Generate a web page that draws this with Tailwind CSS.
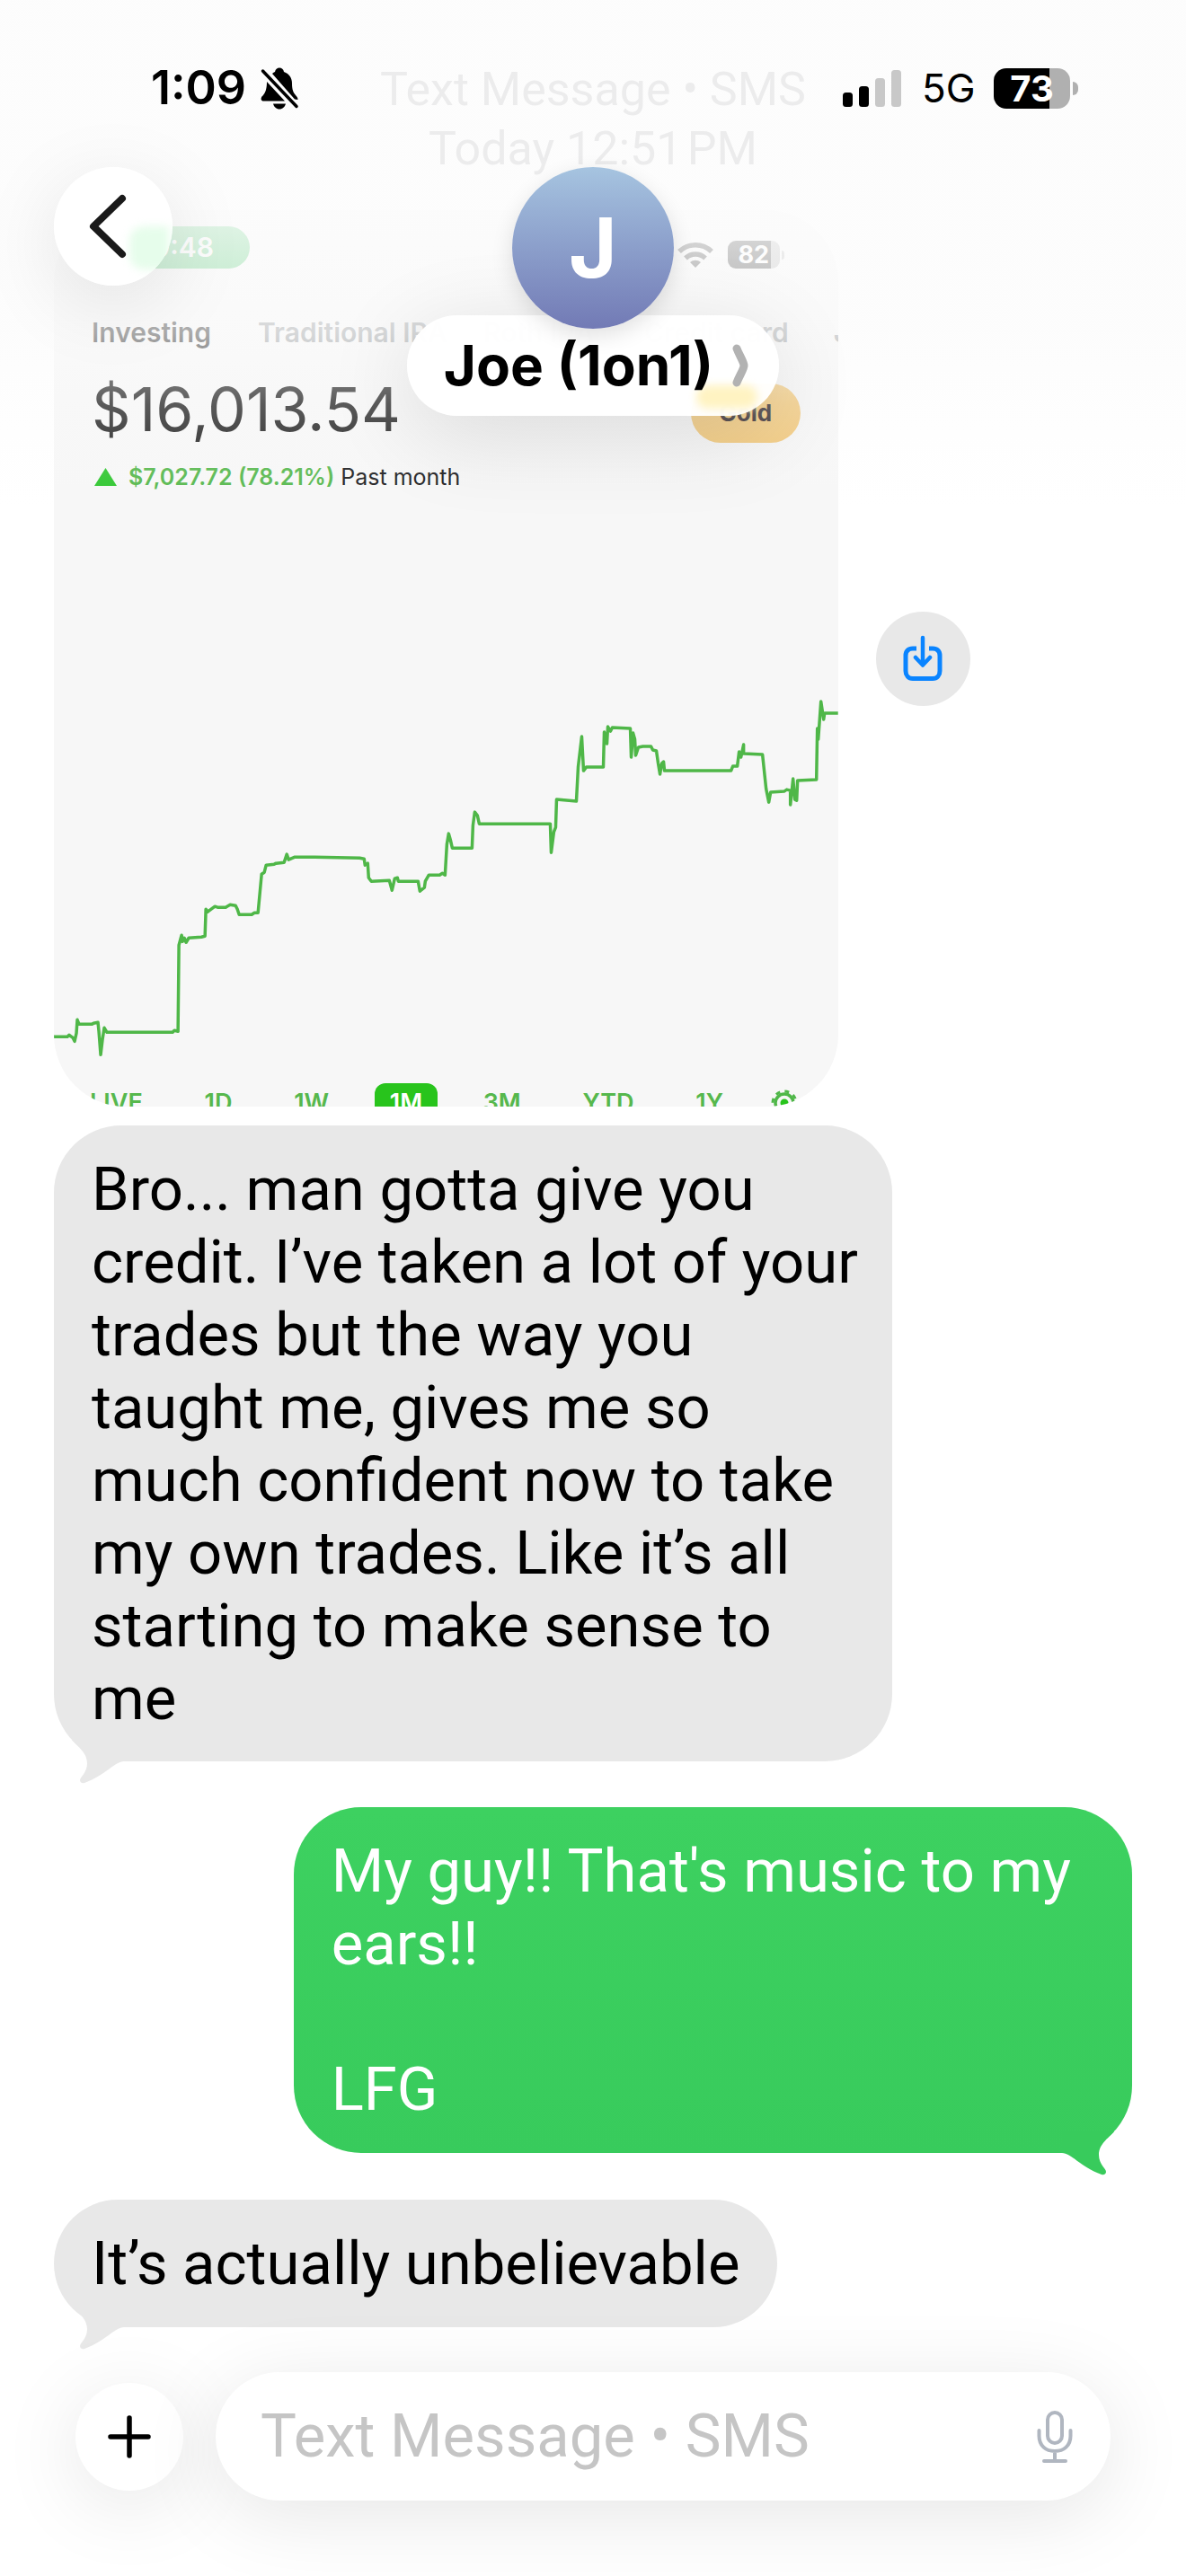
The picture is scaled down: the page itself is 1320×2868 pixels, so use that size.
<!DOCTYPE html>
<html lang="en">
<head>
<meta charset="utf-8">
<meta name="viewport" content="width=device-width, initial-scale=1">
<title>Joe (1on1)</title>
<script src="https://cdn.jsdelivr.net/npm/@tailwindcss/browser@4"></script>
</head>
<body class="relative flex min-h-screen flex-col overflow-x-hidden bg-white font-['Inter',sans-serif] text-black">

<!-- Status bar and navigation, floating over the conversation -->
<header class="absolute inset-x-0 top-0 z-20">
  <div class="flex items-center justify-between pt-[64px] pr-[120px] pl-[168px]">
    <div class="flex h-[68px] items-center gap-4">
      <time class="text-[52px] leading-[68px] font-semibold">1:09</time>
      <svg class="h-[47px] w-[43px]" viewBox="0 0 43 47" role="img" aria-label="Silent mode">
        <path d="M13 7C14 6 15 5.500 16 5C16.500 2 18.500 0.500 21 0.500C23.500 0.500 25.500 2 26 5C32 7 35 12 35 18C35 25 36.500 28 39 31C40.500 32.500 41.500 34 41.500 36L38 35.500Z"/>
        <path d="M7 16L27 37.500H3.500C1 37.500 0 35.500 1 33.500C2 31 7 30 7 16Z"/>
        <path d="M14 40.500H28C27 44 24.500 46.500 21 46.500C17.500 46.500 15 44 14 40.500Z"/>
        <path d="M2.500 4L40 43.500" stroke="#000" stroke-width="3.500" stroke-linecap="round"/>
      </svg>
    </div>
    <div class="flex h-[68px] items-center">
      <svg class="h-[41px] w-[66px]" viewBox="0 0 66 41" role="img" aria-label="Signal, two of four bars">
        <rect x="0" y="25" width="11" height="16" rx="3.500"/>
        <rect x="18" y="18" width="11" height="23" rx="3.500"/>
        <rect x="36" y="9" width="11" height="32" rx="3.500" fill="#c8c8c8"/>
        <rect x="54" y="0" width="11" height="41" rx="3.500" fill="#c8c8c8"/>
      </svg>
      <span class="ml-[22px] w-[80px] text-[44px] leading-[68px]">5G</span>
      <div class="flex h-[45px] w-[85px] items-center justify-center rounded-[14px] bg-linear-to-r from-black from-73% to-[#b0b0b0] to-73% text-[40px] leading-[45px] font-bold text-white">73</div>
      <div class="ml-[3px] h-[15px] w-[6px] rounded-r-full bg-[#b0b0b0]"></div>
    </div>
  </div>
  <nav class="grid grid-cols-[1fr_auto_1fr] items-start px-[60px] pt-[54px]" aria-label="Conversation">
    <button type="button" aria-label="Back" class="relative flex size-[132px] items-center justify-center overflow-hidden rounded-full bg-white/98">
      <span class="absolute top-[66px] left-[84px] h-[48px] w-[44px] rounded-l-2xl bg-[#e6fdeb] blur-[5px]"></span>
      <svg class="relative mr-[12px] h-[72px] w-[44px]" viewBox="0 0 44 72" fill="none" stroke="#1a1a1a" stroke-width="8" stroke-linecap="round" stroke-linejoin="round"><path d="M38 5L6 36L38 67"/></svg>
    </button>
    <div class="flex flex-col items-center">
      <div class="relative z-10 flex size-[180px] items-center justify-center rounded-full bg-linear-to-b from-[#a6c4e0] to-[#727ab5] shadow-[0_8px_24px_rgb(0_0_0/0.12)]">
        <span class="text-[92px] leading-[96px] font-bold text-white">J</span>
      </div>
      <button type="button" class="relative -mt-[15px] flex h-[112px] w-[414px] items-center justify-center gap-[20px] rounded-full bg-white/97 pl-[8px] shadow-[0_20px_100px_rgb(0_0_0/0.12)]">
        <span class="absolute right-[24px] bottom-[8px] h-[26px] w-[68px] rounded-full bg-[#fff3c2] blur-[5px]"></span>
        <span class="relative text-[62px] leading-[72px] font-bold whitespace-nowrap">Joe (1on1)</span>
        <svg class="relative h-[48px] w-[20px]" viewBox="0 0 20 48" fill="none" stroke="#b2b2b2" stroke-width="9" stroke-linecap="round" stroke-linejoin="round"><path d="M6 5C9 13 14 20 14 24C14 28 9 35 6 43"/></svg>
      </button>
    </div>
  </nav>
</header>
<!-- Veil that fades the scrolled content beneath the bar -->
<div class="pointer-events-none absolute inset-x-0 top-0 z-10 h-[570px] bg-[linear-gradient(to_bottom,rgb(252_252_252/0.86)_0px,rgb(252_252_252/0.86)_250px,rgb(251_251_251/0.66)_370px,rgb(250_250_250/0.28)_450px,rgb(250_250_250/0.1)_520px,rgb(255_255_255/0)_570px)]"></div>
<div class="pointer-events-none absolute top-[186px] left-[60px] z-10 size-[132px] rounded-full shadow-[0_20px_90px_rgb(0_0_0/0.1)]"></div>

<main class="flex flex-col px-[60px] pt-[67px]">
  <p class="text-center font-['Roboto',sans-serif] text-[52px] leading-[66px] text-[#8a8a8e]">Text Message • SMS<br>Today 12:51&#8202;PM</p>

  <div class="mt-[35px] flex items-center gap-[42px]">
    <!-- Shared picture: a brokerage account -->
    <figure class="flex h-[998px] w-8/11 flex-col overflow-hidden rounded-[80px] bg-[#f7f7f7]" aria-label="Shared picture">
      <div class="flex items-end justify-between pt-[18px] pr-[60px] pl-[78px]">
        <span class="w-[140px] rounded-full bg-[#30c158] pl-[32px] text-[30px] leading-[47px] font-semibold text-white">9:48</span>
        <span class="flex items-center">
          <svg class="mr-[16px] h-[30px] w-[40px]" viewBox="0 0 40 30" fill="none" stroke="#111" stroke-width="5.500"><path d="M2 11A26 26 0 0 1 38 11"/><path d="M9 18.500A16 16 0 0 1 31 18.500"/><path d="M20 29L14 23A9 9 0 0 1 26 23Z" fill="#111" stroke="none"/></svg>
          <span class="h-[31px] w-[58px] rounded-[9px] bg-linear-to-r from-[#111] from-82% to-[#aaa] to-82% text-center text-[27px] leading-[31px] font-bold text-white">82</span>
          <span class="ml-[2px] h-[10px] w-[3px] rounded-r-full bg-[#aaa]"></span>
        </span>
      </div>
      <div class="flex pt-[51px] pl-[42px] text-[30px] leading-[40px] font-semibold whitespace-nowrap text-[#8f9396]">
        <span class="mr-[52px] text-[#111]">Investing</span><span class="mr-[40px]">Traditional IRA</span><span>Roth IRA</span><span class="mr-[50px] ml-auto">Credit card</span><span class="w-[5px]">J</span>
      </div>
      <div class="flex items-start justify-between pt-[25px] pr-[42px] pl-[42px]">
        <span class="text-[68px] leading-[80px] text-[#1c1c1c]">$16,013.54</span>
        <span class="mt-[12px] w-[122px] rounded-full bg-[#f3c877] text-center text-[26px] leading-[66px] font-bold text-[#2b2024]">Gold</span>
      </div>
      <p class="flex items-center gap-[7px] pt-[16px] pl-[45px] text-[25px] leading-[40px] text-[#1c1c1e]">
        <svg class="mr-[6px] h-[20px] w-[25px]" viewBox="0 0 25 20"><path d="M12.500 0L25 20H0Z" fill="#2ec62e"/></svg>
        <span class="font-semibold text-[#56b84d]">$7,027.72 (78.21%)</span><span>Past month</span>
      </p>
      <svg class="mt-auto w-full shrink-0" viewBox="60 760 872 440" fill="none" stroke="#4fb748" stroke-width="3.500" stroke-linejoin="round" role="img" aria-label="Account value over the past month">
        <path d="M60 1154H75L77 1152L81 1155L83 1159L85 1150L86 1135L88 1140H102L104 1139L109 1138L110 1148L112 1174L114 1157L116 1144L119 1149H192L194 1147L198 1148L199 1052L202 1041L203 1048L205 1044L207 1049L210 1044L224 1043L228 1042L229 1012L231 1015L239 1009L242 1010H251L256 1007L262 1008L264 1012L266 1018H280L283 1016H287L291 973L294 971L296 963L305 962L307 961L316 960L319 951L321 957L328 954H350L400 955L405 956L406 963L409 961L410 977L413 981L433 980L436 991L439 978L442 977L443 981H465L467 992L472 988L473 981L477 974H489L492 972L495 974L497 940L499 928L501 935L503 944H525L526 919L528 904L531 908L533 917H612L613 949L616 926L618 921L619 890L641 892L643 854L647 820L649 858L652 854H671L672 815L675 828L676 809L679 814L681 810L701 811L702 843L704 816L706 823L707 841L710 832L715 831H724L726 835L730 836L732 850L734 862L736 850L738 848L739 858H813L815 853H820L822 837L824 843L827 829V839L848 840L852 878L855 893L857 882L872 881L875 879L879 880V896L882 867L884 890L886 891L887 869L908 868L909 811L910 823L913 781L916 801L917 794H932"/>
      </svg>
      <div class="mt-[6px] -mb-[18px] flex shrink-0 items-center justify-between pr-[45px] pl-[40px] text-[27px] leading-[44px] font-semibold text-[#56b84d]">
        <span>LIVE</span><span>1D</span><span>1W</span><span class="-mx-[18px] w-[70px] rounded-[12px] bg-[#28c41c] text-center text-white">1M</span><span>3M</span><span>YTD</span><span>1Y</span>
        <svg class="-ml-[16px] size-[30px]" viewBox="0 0 30 30" fill="none" stroke="#4fb748"><circle cx="15" cy="15" r="10" stroke-width="3.500"/><circle cx="15" cy="15" r="13" stroke-width="3" stroke-dasharray="5 5.200"/><circle cx="15" cy="15" r="4.500" fill="#28c41c" stroke="none"/></svg>
      </div>
    </figure>
    <button type="button" aria-label="Save picture" class="flex size-[105px] items-center justify-center rounded-full bg-[#e8e8e8]">
      <svg class="h-[52px] w-[44px]" viewBox="0 0 44 52" fill="none" stroke="#0a84ff" stroke-width="5" stroke-linecap="butt" stroke-linejoin="round"><path d="M15 15H11C6 15 3 18 3 23V40C3 45 6 48.500 11 48.500H33C38 48.500 41 45 41 40V23C41 18 38 15 33 15H29"/><path d="M22 3V33M14 25L22 33.500L30 25" stroke-width="4.500" stroke-linecap="round"/></svg>
    </button>
  </div>

  <div class="relative mt-[21px] w-7/9 rounded-[75px] bg-[#e8e8e8] px-[42px] pt-[31px] pb-[29px] font-['Roboto',sans-serif] text-[67px] leading-[81px] whitespace-nowrap">
    Bro... man gotta give you<br>credit. I’ve taken a lot of your<br>trades but the way you<br>taught me, gives me so<br>much confident now to take<br>my own trades. Like it’s all<br>starting to make sense to<br>me
    <svg class="absolute -bottom-[25px] left-[20px] h-[50px] w-[60px]" viewBox="80 1936 60 50"><path d="M80 1937C84 1943 97 1950 97 1963C97 1974 89 1978 89 1982C89 1984 91 1986 94 1985C118 1976 128 1961 138 1961V1937Z" fill="#e8e8e8"/></svg>
  </div>

  <div class="relative mt-[51px] w-7/9 self-end rounded-[75px] bg-linear-to-b from-[#3dd160] to-[#38cb5c] px-[42px] pt-[31px] pb-[30px] font-['Roboto',sans-serif] text-[67px] leading-[81px] whitespace-nowrap text-white">
    My guy!! That's music to my<br>ears!!<br><br>LFG
    <svg class="absolute right-[20px] -bottom-[25px] h-[50px] w-[60px] -scale-x-100" viewBox="80 1936 60 50"><path d="M80 1937C84 1943 97 1950 97 1963C97 1974 89 1978 89 1982C89 1984 91 1986 94 1985C118 1976 128 1961 138 1961V1937Z" fill="#38cb5c"/></svg>
  </div>

  <div class="relative mt-[52px] self-start rounded-[75px] bg-[#e8e8e8] px-[42px] pt-[31px] pb-[30px] font-['Roboto',sans-serif] text-[67px] leading-[81px] whitespace-nowrap">
    It’s actually unbelievable
    <svg class="absolute -bottom-[25px] left-[20px] h-[50px] w-[60px]" viewBox="80 1936 60 50"><path d="M80 1937C84 1943 97 1950 97 1963C97 1974 89 1978 89 1982C89 1984 91 1986 94 1985C118 1976 128 1961 138 1961V1937Z" fill="#e8e8e8"/></svg>
  </div>
</main>

<footer class="mt-auto flex items-center gap-[36px] px-[84px] pt-[49px] pb-[84px]">
  <button type="button" aria-label="Add attachment" class="relative flex size-[120px] shrink-0 items-center justify-center rounded-full bg-white shadow-[0_16px_90px_rgb(0_0_0/0.1)]">
    <svg class="size-[48px]" viewBox="0 0 48 48" stroke="#000" stroke-width="5.500" stroke-linecap="round"><path d="M24 3V45M3 24H45"/></svg>
  </button>
  <div class="relative flex h-[143px] min-w-0 flex-1 items-center rounded-full bg-white pr-[42px] pl-[50px] shadow-[0_16px_90px_rgb(0_0_0/0.1)]">
    <label for="message" class="sr-only">Message</label>
    <input id="message" type="text" placeholder="Text Message • SMS" class="min-w-0 flex-1 bg-transparent font-['Roboto',sans-serif] text-[67px] leading-[81px] outline-none placeholder:text-[#c5c5c5]">
    <button type="button" aria-label="Dictate" class="shrink-0">
      <svg class="block h-[60px] w-[40px]" viewBox="0 0 40 60" fill="none" stroke="#b0b6c0" stroke-width="4" stroke-linecap="round"><rect x="12" y="3" width="16" height="34" rx="8"/><path d="M2.500 23V29C2.500 40 10 46 20 46C30 46 37.500 40 37.500 29V23M20 46V56M8 57H32"/></svg>
    </button>
  </div>
</footer>
</body>
</html>
